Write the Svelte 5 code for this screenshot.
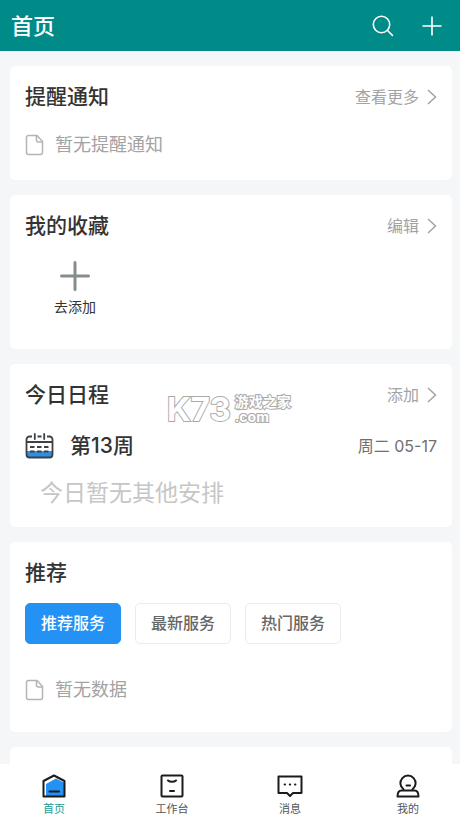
<script lang="ts">
  type Tab = 'home' | 'work' | 'message' | 'mine'

  const services = ['推荐服务', '最新服务', '热门服务']
  const tabs: { id: Tab; label: string }[] = [
    { id: 'home', label: '首页' },
    { id: 'work', label: '工作台' },
    { id: 'message', label: '消息' },
    { id: 'mine', label: '我的' },
  ]

  let service = $state('推荐服务')
  let tab: Tab = $state('home')
</script>

{#snippet more(label: string)}
  <button class="more">
    {label}
    <svg width="10" height="16" viewBox="0 0 10 16" fill="none" stroke="currentColor" stroke-width="1.5">
      <path d="M1 1l7.500 7L1 15" />
    </svg>
  </button>
{/snippet}

{#snippet empty(label: string)}
  <p class="empty">
    <svg width="20" height="22" viewBox="0 0 20 22" fill="none" stroke="#b4b4b4" stroke-width="1.5">
      <path d="M3.500 1.500H12L17.500 7.500v11a2 2 0 0 1-2 2h-12a2 2 0 0 1-2-2v-15a2 2 0 0 1 2-2z" />
      <path d="M11.500 1.500v4.500a2 2 0 0 0 2 2h4" />
    </svg>
    {label}
  </p>
{/snippet}

<div class="page">
  <header class="topbar">
    <h1>首页</h1>
    <div class="actions">
      <button aria-label="搜索">
        <svg width="22" height="22" viewBox="0 0 22 22" fill="none" stroke="currentColor" stroke-width="1.6">
          <circle cx="9.5" cy="9.5" r="8.2" />
          <path d="M15.3 15.3l5.6 5.6" />
        </svg>
      </button>
      <button aria-label="新建">
        <svg width="20" height="20" viewBox="0 0 20 20" fill="none" stroke="currentColor" stroke-width="1.6">
          <path d="M10 .5v19M.5 10h19" />
        </svg>
      </button>
    </div>
  </header>

  <main>
    <section class="card">
      <div class="head">
        <h2>提醒通知</h2>
        {@render more('查看更多')}
      </div>
      {@render empty('暂无提醒通知')}
    </section>

    <section class="card">
      <div class="head">
        <h2>我的收藏</h2>
        {@render more('编辑')}
      </div>
      <button class="add">
        <svg width="30" height="30" viewBox="0 0 30 30" fill="none" stroke="#848e8c" stroke-width="3" stroke-linecap="round">
          <path d="M15 1.5v27M1.5 15h27" />
        </svg>
        去添加
      </button>
    </section>

    <section class="card schedule">
      <div class="head">
        <h2>今日日程</h2>
        {@render more('添加')}
      </div>
      <div class="day">
        <svg width="29" height="26" viewBox="0 0 29 26" fill="none" stroke="#3c4144" stroke-width="1.8">
          <path d="M2 18h25v3.5a3 3 0 0 1-3 3H5a3 3 0 0 1-3-3z" fill="#2e8fe6" stroke="none" />
          <path d="M7 3.5H4.500a3 3 0 0 0-3 3v15a3 3 0 0 0 3 3h20a3 3 0 0 0 3-3v-15a3 3 0 0 0-3-3H22M12.500 3.500h4M1.500 9h26" />
          <path d="M9.800 1v5M19.200 1v5" stroke-linecap="round" />
          <path d="M5 14h4.500M12 14h4.500M19 14h4.500M5 18.500h4.500M12 18.500h4.500M19 18.500h4.500" />
        </svg>
        <strong>第13周</strong>
        <time datetime="05-17">周二 05-17</time>
      </div>
      <p class="none">今日暂无其他安排</p>
      <div class="watermark">
        <span class="mark">K73</span>
        <span class="site"><span>游戏之家</span><span class="com">.com</span></span>
      </div>
    </section>

    <section class="card">
      <div class="head">
        <h2>推荐</h2>
      </div>
      <div class="services">
        {#each services as name}
          <button class:active={service === name} onclick={() => (service = name)}>{name}</button>
        {/each}
      </div>
      {@render empty('暂无数据')}
    </section>

    <section class="card"></section>
  </main>

  <nav class="tabbar">
    {#each tabs as t}
      <button class:active={tab === t.id} onclick={() => (tab = t.id)}>
        <svg width="26" height="24" viewBox="0 0 26 24" fill="none" stroke="#1b1b1b" stroke-width="2" stroke-linejoin="round" stroke-linecap="round">
          {#if t.id === 'home'}
            <path d="M5 10l10-5.500 8 4V22H5z" fill="#2492f5" stroke="none" />
            <path d="M2.500 7L13 1.500 23.500 7v15.500h-21z" />
            <path d="M8.500 17.500h9.500" />
          {:else if t.id === 'work'}
            <rect x="2.500" y="1.500" width="21" height="21" rx="1" />
            <path d="M9 6.500c2 1.800 6 1.800 8 0M11 17h4" />
          {:else if t.id === 'message'}
            <path d="M1.500 2.500h23V19H16l-3 3-3-3H1.500z" />
            <path d="M7.600 10.500h.4M12.800 10.500h.4M18 10.500h.4" />
          {:else}
            <path d="M8.500 15.300a7.600 7.600 0 1 1 9 0" />
            <path d="M6.500 16.500h13c2.500 0 4 2.500 4 6h-21c0-3.500 1.500-6 4-6z" />
            <path d="M11.500 11.500h3.500" />
          {/if}
        </svg>
        {t.label}
      </button>
    {/each}
  </nav>
</div>

<style>
  :global(body) {
    margin: 0;
  }

  .page {
    display: flex;
    flex-direction: column;
    height: 100vh;
    background: #f5f6f8;
    color: #333;
    font-family: Inter, 'Noto Sans CJK SC', sans-serif;
  }

  h1,
  h2,
  p {
    margin: 0;
  }

  svg {
    display: block;
    flex: none;
  }

  button {
    padding: 0;
    border: 0;
    background: none;
    color: inherit;
    font: inherit;
    cursor: pointer;
  }

  .topbar {
    display: flex;
    align-items: center;
    justify-content: space-between;
    padding: 11px 18px 10px 11px;
    background: #008b89;
    color: #fff;
  }

  h1 {
    font-size: 22px;
    font-weight: 500;
    line-height: 30px;
  }

  .actions {
    display: flex;
    align-items: center;
    gap: 28px;
  }

  main {
    flex: 1;
    min-height: 0;
    display: flex;
    flex-direction: column;
    gap: 15px;
    padding: 15px 8px 0 10px;
    overflow: auto;
    scrollbar-width: none;
  }

  .card {
    flex: none;
    min-height: 114px;
    box-sizing: border-box;
    padding: 16px 15px 22px;
    border-radius: 5px;
    background: #fff;
  }

  .head {
    display: flex;
    align-items: center;
    justify-content: space-between;
  }

  h2 {
    font-size: 21px;
    font-weight: 500;
    line-height: 30px;
  }

  .more {
    display: flex;
    align-items: center;
    gap: 8px;
    color: #a3a3a3;
    font-size: 16px;
    line-height: 24px;
  }

  .empty {
    display: flex;
    align-items: center;
    gap: 10px;
    margin-top: 21px;
    color: #a3a3a3;
    font-size: 18px;
    line-height: 24px;
  }

  .add {
    display: flex;
    flex-direction: column;
    align-items: center;
    gap: 6px;
    width: 100px;
    margin: 20px 0 10px;
    font-size: 14px;
    line-height: 20px;
  }

  .schedule {
    position: relative;
    padding-bottom: 19px;
  }

  .day {
    display: flex;
    align-items: center;
    gap: 16px;
    margin-top: 21px;
  }

  .day strong {
    flex: 1;
    font-size: 21px;
    font-weight: 500;
    line-height: 30px;
  }

  .day time {
    color: #6f6f6f;
    font-size: 16px;
    line-height: 24px;
  }

  .none {
    margin: 17px 0 0 15px;
    color: #c6c6c6;
    font-size: 23px;
    line-height: 30px;
  }

  .watermark {
    position: absolute;
    top: 29px;
    left: 157px;
    display: flex;
    align-items: center;
    gap: 4px;
    color: #fff;
    font-weight: 700;
    -webkit-text-stroke: 2px #aaa;
    paint-order: stroke;
    pointer-events: none;
  }

  .mark {
    font-size: 33px;
    line-height: 32px;
  }

  .site {
    display: flex;
    flex-direction: column;
    font-size: 14px;
    line-height: 15px;
  }

  .com {
    font-size: 14px;
  }

  .services {
    display: flex;
    gap: 14px;
    margin: 15px 0 34px;
  }

  .services button {
    padding: 8px 15px;
    border: 1px solid #ebebeb;
    border-radius: 5px;
    color: #666;
    font-size: 16px;
    font-weight: 500;
    line-height: 23px;
  }

  .services .active {
    border-color: #2492f5;
    background: #2492f5;
    color: #fff;
  }

  .services + .empty {
    margin-bottom: 8px;
  }

  .tabbar {
    display: flex;
    justify-content: space-between;
    padding: 10px 27px 0 29px;
    background: #fff;
  }

  .tabbar button {
    display: flex;
    flex-direction: column;
    align-items: center;
    gap: 3px;
    width: 50px;
    color: #555;
    font-size: 11px;
    line-height: 16px;
  }

  .tabbar .active {
    color: #1b9c93;
  }
</style>
